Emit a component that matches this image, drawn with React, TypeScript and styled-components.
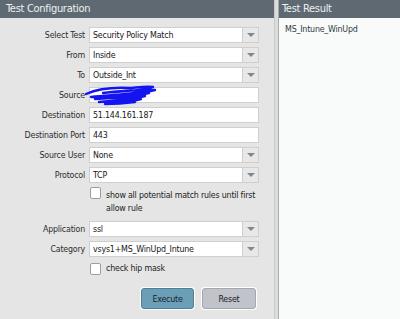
import React from "react";
import styled, { createGlobalStyle } from "styled-components";

const GlobalStyle = createGlobalStyle`
  html, body {
    margin: 0;
    padding: 0;
    width: 400px;
    height: 319px;
    overflow: hidden;
    background: #e5e5e5;
  }
  body {
    font-family: "DejaVu Sans Condensed", "Liberation Sans", Arial, sans-serif;
  }
`;

const Page = styled.div`
  display: flex;
  width: 400px;
  height: 319px;
`;

const LeftPanel = styled.div`
  width: 274px;
  display: flex;
  flex-direction: column;
  background: #e5e5e5;
`;

const Splitter = styled.div`
  width: 3px;
  background: #dcdcdc;
  border-left: 1px solid #c9c9c9;
  border-right: 1px solid #a9acae;
`;

const RightPanel = styled.div`
  flex: 1;
  display: flex;
  flex-direction: column;
  background: #f9fafa;
`;

const Header = styled.div<{ $pad: number }>`
  height: 18px;
  line-height: 18px;
  background: #5e6971;
  color: #eef1f3;
  font-size: 11px;
  letter-spacing: -0.3px;
  padding-left: ${(p) => p.$pad}px;
  white-space: nowrap;
`;

const ResultList = styled.div`
  padding: 4px 6px;
  font-size: 8.8px;
  letter-spacing: -0.2px;
  color: #2f3a42;
  line-height: 14px;
`;

const Form = styled.div`
  display: grid;
  grid-template-columns: 85px 170px;
  column-gap: 4px;
  row-gap: 4px;
  padding-top: 9px;
  font-size: 8.8px;
  letter-spacing: -0.2px;
  color: #222;
`;

const Label = styled.div`
  text-align: right;
  line-height: 16px;
  height: 16px;
  white-space: nowrap;
  color: #2d2d2d;
`;

const Field = styled.div`
  position: relative;
  height: 16px;
  display: flex;
`;

const TextBox = styled.div`
  flex: 1;
  box-sizing: border-box;
  height: 16px;
  line-height: 14px;
  background: #fff;
  border: 1px solid #cfcfcf;
  padding-left: 3px;
  color: #161616;
  white-space: nowrap;
  overflow: hidden;
`;

const ArrowBox = styled.div`
  width: 16px;
  box-sizing: border-box;
  height: 16px;
  background: #e8e8e8;
  border: 1px solid #cfcfcf;
  border-left: none;
  display: flex;
  align-items: center;
  justify-content: center;
`;

const Arrow = styled.div`
  width: 0;
  height: 0;
  border-left: 4px solid transparent;
  border-right: 4px solid transparent;
  border-top: 4px solid #7b8996;
`;

const CheckRow = styled.div<{ $h: number }>`
  grid-column: 2;
  display: flex;
  align-items: flex-start;
  height: ${(p) => p.$h}px;
  padding-left: 1px;
`;

const Box = styled.div<{ $top: number }>`
  width: 11px;
  height: 12px;
  margin-top: ${(p) => p.$top}px;
  box-sizing: border-box;
  background: #fff;
  border: 1px solid #9d9d9d;
  border-radius: 2px;
  flex-shrink: 0;
`;

const CheckText = styled.div<{ $top: number }>`
  margin-left: 5px;
  line-height: 13px;
  margin-top: ${(p) => p.$top}px;
  color: #222;
  white-space: nowrap;
`;

const ButtonRow = styled.div`
  grid-column: 2;
  display: flex;
  justify-content: flex-end;
  gap: 8px;
  padding-right: 3px;
  margin-top: 7px;
`;

const Button = styled.div<{ $primary?: boolean }>`
  width: ${(p) => (p.$primary ? 53 : 54)}px;
  height: 21px;
  box-sizing: border-box;
  border-radius: 3px;
  background: ${(p) => (p.$primary ? "#6b9fb7" : "#c0c3ca")};
  border: 1px solid ${(p) => (p.$primary ? "#4f7f96" : "#a3a7ae")};
  box-shadow: 0 0 0 1px #ffffff;
  display: flex;
  align-items: center;
  justify-content: center;
  font-size: 8.8px;
  color: #1b2227;
`;

const Scribble = styled.svg`
  position: absolute;
  left: -6px;
  top: -2px;
  pointer-events: none;
`;

const Select = ({ value }: { value: string }) => (
  <Field>
    <TextBox>{value}</TextBox>
    <ArrowBox>
      <Arrow />
    </ArrowBox>
  </Field>
);

const Input = ({ value, hidden }: { value: string; hidden?: boolean }) => (
  <Field>
    <TextBox>{value}</TextBox>
    {hidden && (
      <Scribble width="76" height="22" viewBox="0 0 76 22">
        <path
          d="M3 9 C14 4 30 2 48 3 C58 2 64 1 70 2 C60 6 40 6 20 8 C34 6 52 5 72 5 C62 8 42 9 8 12 C26 10 48 9 66 8 C54 11 34 12 12 14 C28 13 46 12 62 11 C50 14 34 15 16 17 C30 16 44 15 58 14 C48 17 36 18 22 19 C34 19 44 18 52 17"
          stroke="#1414f0"
          strokeWidth="2.4"
          fill="none"
          strokeLinecap="round"
          strokeLinejoin="round"
        />
      </Scribble>
    )}
  </Field>
);

export default function App() {
  return (
    <Page>
      <GlobalStyle />
      <LeftPanel>
        <Header $pad={6}>Test Configuration</Header>
        <Form>
          <Label>Select Test</Label>
          <Select value="Security Policy Match" />
          <Label>From</Label>
          <Select value="Inside" />
          <Label>To</Label>
          <Select value="Outside_Int" />
          <Label>Source</Label>
          <Input value="" hidden />
          <Label>Destination</Label>
          <Input value="51.144.161.187" />
          <Label>Destination Port</Label>
          <Input value="443" />
          <Label>Source User</Label>
          <Select value="None" />
          <Label>Protocol</Label>
          <Select value="TCP" />
          <CheckRow $h={30}>
            <Box $top={0} />
            <CheckText $top={2}>
              show all potential match rules until first
              <br />
              allow rule
            </CheckText>
          </CheckRow>
          <Label>Application</Label>
          <Select value="ssl" />
          <Label>Category</Label>
          <Select value="vsys1+MS_WinUpd_Intune" />
          <CheckRow $h={16}>
            <Box $top={2} />
            <CheckText $top={1}>check hip mask</CheckText>
          </CheckRow>
          <ButtonRow>
            <Button $primary>Execute</Button>
            <Button>Reset</Button>
          </ButtonRow>
        </Form>
      </LeftPanel>
      <Splitter />
      <RightPanel>
        <Header $pad={3}>Test Result</Header>
        <ResultList>MS_Intune_WinUpd</ResultList>
      </RightPanel>
    </Page>
  );
}
